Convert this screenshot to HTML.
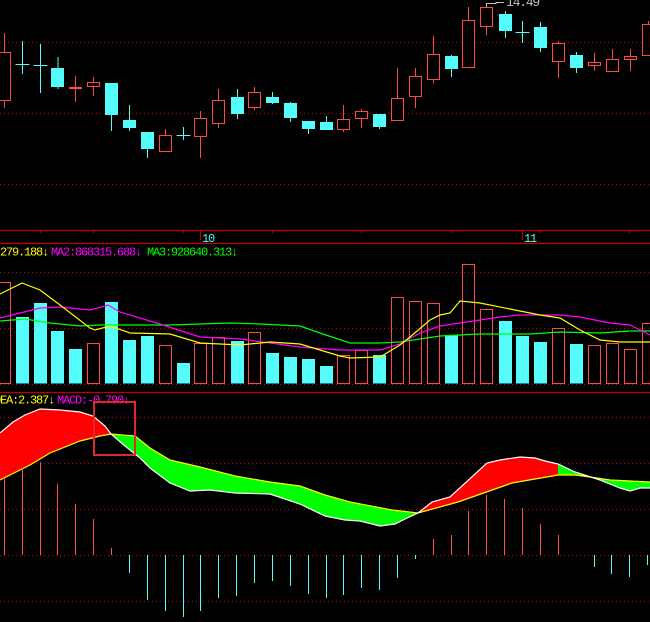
<!DOCTYPE html>
<html><head><meta charset="utf-8"><style>
html,body{margin:0;padding:0;background:#000;width:650px;height:622px;overflow:hidden}
svg{display:block}
text{font-family:"Liberation Mono","DejaVu Sans Mono",monospace}
</style></head><body>
<svg width="650" height="622" viewBox="0 0 650 622" xmlns="http://www.w3.org/2000/svg">
<rect width="650" height="622" fill="#000"/>
<g stroke="#c00000" stroke-width="1" stroke-dasharray="1,3">
<line x1="0" y1="42.5" x2="650" y2="42.5"/>
<line x1="0" y1="113.5" x2="650" y2="113.5"/>
<line x1="0" y1="184.5" x2="650" y2="184.5"/>
<line x1="0" y1="272.5" x2="650" y2="272.5"/>
<line x1="0" y1="328.5" x2="650" y2="328.5"/>
<line x1="0" y1="384.5" x2="650" y2="384.5"/>
<line x1="0" y1="417.5" x2="650" y2="417.5"/>
<line x1="0" y1="463.5" x2="650" y2="463.5"/>
<line x1="0" y1="509.5" x2="650" y2="509.5"/>
<line x1="0" y1="555.5" x2="650" y2="555.5"/>
<line x1="0" y1="601.5" x2="650" y2="601.5"/>
</g>
<g stroke="#c00000" stroke-width="1.2">
<line x1="0" y1="230.5" x2="650" y2="230.5"/>
<line x1="0" y1="243.5" x2="650" y2="243.5"/>
<line x1="0" y1="392.5" x2="650" y2="392.5"/>
<line x1="40.5" y1="230" x2="40.5" y2="233"/>
<line x1="93.5" y1="230" x2="93.5" y2="233"/>
<line x1="183.5" y1="230" x2="183.5" y2="233"/>
<line x1="200.5" y1="230" x2="200.5" y2="240"/>
<line x1="272.5" y1="230" x2="272.5" y2="233"/>
<line x1="361.5" y1="230" x2="361.5" y2="233"/>
<line x1="451.5" y1="230" x2="451.5" y2="233"/>
<line x1="522.5" y1="230" x2="522.5" y2="240"/>
<line x1="540.5" y1="230" x2="540.5" y2="233"/>
<line x1="629.5" y1="230" x2="629.5" y2="233"/>
</g>
<text x="202" y="242" fill="#4ff" font-size="12" letter-spacing="-1.2">10</text>
<text x="524" y="242" fill="#4ff" font-size="12" letter-spacing="-1.2">11</text>

<g stroke-width="1">
<g stroke="#54fcfc">
<line x1="22.5" y1="41" x2="22.5" y2="74"/><line x1="15.5" y1="64.5" x2="29.5" y2="64.5"/>
<line x1="40.5" y1="44" x2="40.5" y2="93"/><line x1="33.5" y1="65.5" x2="47.5" y2="65.5"/>
<line x1="58" y1="57" x2="58" y2="89"/>
<line x1="111.5" y1="83" x2="111.5" y2="131"/>
<line x1="129.5" y1="105" x2="129.5" y2="131"/>
<line x1="147.5" y1="132" x2="147.5" y2="158"/>
<line x1="183.5" y1="127" x2="183.5" y2="140"/><line x1="176.5" y1="135.5" x2="190.5" y2="135.5"/>
<line x1="237.5" y1="89" x2="237.5" y2="119"/>
<line x1="272.5" y1="92" x2="272.5" y2="104"/>
<line x1="290.5" y1="102" x2="290.5" y2="122"/>
<line x1="308.5" y1="121" x2="308.5" y2="134"/>
<line x1="326.5" y1="116" x2="326.5" y2="130"/>
<line x1="379.5" y1="114" x2="379.5" y2="129"/>
<line x1="451.5" y1="55" x2="451.5" y2="77"/>
<line x1="505.5" y1="11" x2="505.5" y2="38"/>
<line x1="522.5" y1="21" x2="522.5" y2="43"/><line x1="515.5" y1="32.5" x2="529.5" y2="32.5"/>
<line x1="540.5" y1="22" x2="540.5" y2="52"/>
<line x1="576.5" y1="52" x2="576.5" y2="73"/>
</g>
<g fill="#54fcfc">
<rect x="51" y="68" width="13" height="19"/>
<rect x="105" y="83" width="13" height="32"/>
<rect x="123" y="120" width="13" height="8"/>
<rect x="141" y="132" width="13" height="17"/>
<rect x="231" y="97" width="13" height="17"/>
<rect x="266" y="97" width="13" height="6"/>
<rect x="284" y="103" width="13" height="15"/>
<rect x="302" y="121" width="13" height="8"/>
<rect x="320" y="122" width="13" height="8"/>
<rect x="373" y="114" width="13" height="13"/>
<rect x="445" y="56" width="13" height="13"/>
<rect x="499" y="14" width="13" height="17"/>
<rect x="534" y="27" width="13" height="21"/>
<rect x="570" y="55" width="13" height="13"/>
</g>
<g stroke="#ff4848">
<line x1="4.5" y1="33" x2="4.5" y2="108"/>
<line x1="75.5" y1="76" x2="75.5" y2="102"/><line x1="69" y1="88" x2="82" y2="88" stroke-width="2"/>
<line x1="93.5" y1="77" x2="93.5" y2="96"/>
<line x1="165.5" y1="129" x2="165.5" y2="152"/>
<line x1="200.5" y1="111" x2="200.5" y2="158"/>
<line x1="218.5" y1="89" x2="218.5" y2="128"/>
<line x1="254.5" y1="87" x2="254.5" y2="110"/>
<line x1="343.5" y1="105" x2="343.5" y2="132"/>
<line x1="361.5" y1="109" x2="361.5" y2="128"/>
<line x1="397.5" y1="68" x2="397.5" y2="121"/>
<line x1="415.5" y1="68" x2="415.5" y2="108"/>
<line x1="433.5" y1="36" x2="433.5" y2="83"/>
<line x1="468.5" y1="7" x2="468.5" y2="67"/>
<line x1="486.5" y1="3" x2="486.5" y2="35"/>
<line x1="558.5" y1="41" x2="558.5" y2="78"/>
<line x1="594.5" y1="53" x2="594.5" y2="71"/>
<line x1="612.5" y1="49" x2="612.5" y2="72"/>
<line x1="630.5" y1="49" x2="630.5" y2="71"/>
<line x1="648.5" y1="21" x2="648.5" y2="55"/>
</g>
<g stroke="#ff4848" fill="#000">
<rect x="-2.5" y="52.5" width="13" height="48"/>
<rect x="87.5" y="82.5" width="12" height="4"/>
<rect x="159.5" y="135.5" width="12" height="16"/>
<rect x="194.5" y="118.5" width="12" height="18"/>
<rect x="212.5" y="100.5" width="12" height="23"/>
<rect x="248.5" y="92.5" width="12" height="15"/>
<rect x="337.5" y="119.5" width="12" height="10"/>
<rect x="355.5" y="111.5" width="12" height="7"/>
<rect x="391.5" y="98.5" width="12" height="22"/>
<rect x="409.5" y="76.5" width="12" height="20"/>
<rect x="427.5" y="54.5" width="12" height="25"/>
<rect x="462.5" y="20.5" width="12" height="47"/>
<rect x="480.5" y="7.5" width="12" height="19"/>
<rect x="552.5" y="43.5" width="12" height="18"/>
<rect x="588.5" y="62.5" width="12" height="3"/>
<rect x="606.5" y="59.5" width="12" height="12"/>
<rect x="624.5" y="56.5" width="12" height="3"/>
<rect x="642.5" y="24.5" width="12" height="31"/>
</g>
</g>
<polyline points="486.5,7 486.5,3.5 496,3.5 496,2.5 504,2.5" fill="none" stroke="#c0c0c0"/>
<text x="506" y="6" fill="#c0c0c0" font-size="13" letter-spacing="-1.2">14.49</text>

<text y="255.5" font-size="12" letter-spacing="-1.2"><tspan x="0" fill="#ff0">279.188↓</tspan><tspan x="51" fill="#f0f">MA2:868315.688↓</tspan><tspan x="147" fill="#0f0">MA3:928640.313↓</tspan></text>

<g fill="#54fcfc">
<rect x="16" y="317" width="13" height="66.5"/>
<rect x="34" y="303" width="13" height="80.5"/>
<rect x="51" y="331" width="13" height="52.5"/>
<rect x="69" y="349" width="13" height="34.5"/>
<rect x="105" y="302" width="13" height="81.5"/>
<rect x="123" y="340" width="13" height="43.5"/>
<rect x="141" y="336" width="13" height="47.5"/>
<rect x="177" y="363" width="13" height="20.5"/>
<rect x="231" y="341" width="13" height="42.5"/>
<rect x="266" y="353" width="13" height="30.5"/>
<rect x="284" y="357" width="13" height="26.5"/>
<rect x="302" y="359" width="13" height="24.5"/>
<rect x="320" y="366" width="13" height="17.5"/>
<rect x="373" y="355" width="13" height="28.5"/>
<rect x="445" y="335" width="13" height="48.5"/>
<rect x="499" y="321" width="13" height="62.5"/>
<rect x="516" y="336" width="13" height="47.5"/>
<rect x="534" y="342" width="13" height="41.5"/>
<rect x="570" y="344" width="13" height="39.5"/>
</g>
<g fill="none" stroke="#ff4848">
<rect x="-2.5" y="282.5" width="13" height="101"/>
<rect x="87.5" y="343.5" width="12" height="40"/>
<rect x="159.5" y="345.5" width="12" height="38"/>
<rect x="194.5" y="343.5" width="12" height="40"/>
<rect x="212.5" y="337.5" width="12" height="46"/>
<rect x="248.5" y="332.5" width="12" height="51"/>
<rect x="337.5" y="355.5" width="12" height="28"/>
<rect x="355.5" y="350.5" width="12" height="33"/>
<rect x="391.5" y="297.5" width="12" height="86"/>
<rect x="409.5" y="301.5" width="12" height="82"/>
<rect x="427.5" y="303.5" width="12" height="80"/>
<rect x="462.5" y="264.5" width="12" height="119"/>
<rect x="480.5" y="309.5" width="12" height="74"/>
<rect x="552.5" y="328.5" width="12" height="55"/>
<rect x="588.5" y="345.5" width="12" height="38"/>
<rect x="606.5" y="343.5" width="12" height="40"/>
<rect x="624.5" y="349.5" width="12" height="34"/>
<rect x="642.5" y="323.5" width="12" height="60"/>
</g>
<polyline fill="none" stroke="#0f0" stroke-width="1.2" points="0,321 25,319 50,323 80,326 100,325 130,325 170,325 230,323 260,324 300,326 320,333 350,343 380,343 400,342 440,336 480,334 530,334 560,332 600,333 630,331 650,331"/>
<polyline fill="none" stroke="#f0f" stroke-width="1.2" points="0,318 20,313 40,308 60,307 90,310 108,305 120,312 160,324 200,337 240,339 270,343 300,347 340,350 380,350 400,344 420,333 440,326 460,323 480,320 500,317 520,315 540,315 560,315 580,317 610,323 630,325 650,335"/>
<polyline fill="none" stroke="#ff0" stroke-width="1.2" points="0,294 22,283 40,290 60,305 90,328 95,330 110,326 130,333 170,334 200,343 240,345 270,342 300,344 320,350 340,356 350,358 380,357 400,345 410,337 430,320 440,315 450,313 460,301 480,303 510,309 540,315 560,318 580,330 600,340 620,342 650,342"/>

<text y="403.5" font-size="12" letter-spacing="-1.2"><tspan x="-6" fill="#ff0">DEA:2.387↓</tspan><tspan x="57" fill="#f0f">MACD:-0.790↓</tspan></text>

<polygon fill="#00ff00" points="0,433 13,422 25,415 40,409 60,410 80,412 93,416 105,426 111,434 125,446 140,458 150,468 170,483 190,491 210,490 235,493 270,494 300,504 325,516 345,520 360,521 380,526 395,524 405,519 418,513 432,502 450,497 487,463 500,460 520,457 535,458 545,461 558,464 575,472 600,480 620,488 630,491 640,488 650,488 650,482 630,481 610,480 590,477 575,475 558,475 512,483 458,502 418,513 392,510 350,502 325,495 300,486 270,482 235,476 200,467 170,460 150,448 135,436 111,434 100,436 80,441 50,453 30,465 0,480"/>
<polygon fill="#ff0000" points="0,433 13,422 25,415 40,409 60,410 80,412 93,416 105,426 111,434 100,436 80,441 50,453 30,465 0,480"/>
<polygon fill="#ff0000" points="418,513 432,502 450,497 487,463 500,460 520,457 535,458 545,461 558,464 558,475 512,483 458,502"/>
<polyline fill="none" stroke="#ff0" stroke-width="1.2" points="0,480 30,465 50,453 80,441 100,436 111,434 135,436 150,448 170,460 200,467 235,476 270,482 300,486 325,495 350,502 392,510 418,513 458,502 512,483 558,475 575,475 590,477 610,480 630,481 650,482"/>
<polyline fill="none" stroke="#fff" stroke-width="1.2" points="0,433 13,422 25,415 40,409 60,410 80,412 93,416 105,426 111,434 125,446 140,458 150,468 170,483 190,491 210,490 235,493 270,494 300,504 325,516 345,520 360,521 380,526 395,524 405,519 418,513 432,502 450,497 487,463 500,460 520,457 535,458 545,461 558,464 575,472 600,480 620,488 630,491 640,488 650,488"/>

<g stroke="#ff5050" stroke-width="1">
<line x1="4.5" y1="479" x2="4.5" y2="555"/>
<line x1="22.5" y1="468" x2="22.5" y2="555"/>
<line x1="40.5" y1="462" x2="40.5" y2="555"/>
<line x1="57.5" y1="484" x2="57.5" y2="555"/>
<line x1="75.5" y1="504" x2="75.5" y2="555"/>
<line x1="93.5" y1="519" x2="93.5" y2="555"/>
<line x1="111.5" y1="548" x2="111.5" y2="555"/>
<line x1="433.5" y1="539" x2="433.5" y2="555"/>
<line x1="451.5" y1="535" x2="451.5" y2="555"/>
<line x1="468.5" y1="511" x2="468.5" y2="555"/>
<line x1="486.5" y1="495" x2="486.5" y2="555"/>
<line x1="504.5" y1="499" x2="504.5" y2="555"/>
<line x1="522.5" y1="508" x2="522.5" y2="555"/>
<line x1="540.5" y1="524" x2="540.5" y2="555"/>
<line x1="558.5" y1="535" x2="558.5" y2="555"/>
</g>
<g stroke="#54fcfc" stroke-width="1">
<line x1="129.5" y1="555" x2="129.5" y2="573"/>
<line x1="147.5" y1="555" x2="147.5" y2="600"/>
<line x1="165.5" y1="555" x2="165.5" y2="611"/>
<line x1="183.5" y1="555" x2="183.5" y2="617"/>
<line x1="200.5" y1="555" x2="200.5" y2="611"/>
<line x1="218.5" y1="555" x2="218.5" y2="598"/>
<line x1="236.5" y1="555" x2="236.5" y2="596"/>
<line x1="254.5" y1="555" x2="254.5" y2="583"/>
<line x1="272.5" y1="555" x2="272.5" y2="581"/>
<line x1="290.5" y1="555" x2="290.5" y2="586"/>
<line x1="308.5" y1="555" x2="308.5" y2="594"/>
<line x1="326.5" y1="555" x2="326.5" y2="598"/>
<line x1="343.5" y1="555" x2="343.5" y2="595"/>
<line x1="361.5" y1="555" x2="361.5" y2="588"/>
<line x1="379.5" y1="555" x2="379.5" y2="590"/>
<line x1="397.5" y1="555" x2="397.5" y2="578"/>
<line x1="415.5" y1="555" x2="415.5" y2="559"/>
<line x1="594.5" y1="555" x2="594.5" y2="567"/>
<line x1="611.5" y1="555" x2="611.5" y2="574"/>
<line x1="629.5" y1="555" x2="629.5" y2="577"/>
<line x1="647.5" y1="555" x2="647.5" y2="565"/>
</g>
<rect x="94" y="402" width="41" height="53" fill="none" stroke="#e02828" stroke-width="2"/>
</svg>
</body></html>
